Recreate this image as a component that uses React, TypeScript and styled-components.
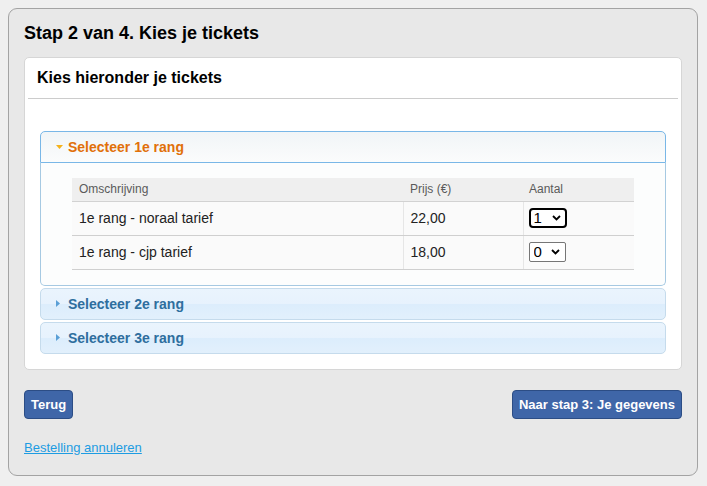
import React, { useState } from "react";
import styled, { createGlobalStyle } from "styled-components";

const Global = createGlobalStyle`
  html, body { margin: 0; padding: 0; background: #efefef; }
  body { padding: 8px; font-family: "Liberation Sans", Arial, sans-serif; color: #222; }
  * { box-sizing: border-box; }
`;

const Panel = styled.div`
  width: 690px;
  background: #e8e8e8;
  border: 1px solid #a3a3a3;
  border-radius: 9px;
  padding: 15px 15px 19px;
`;

const Title = styled.h1`
  margin: 0 0 15px;
  font-size: 18px;
  line-height: 18px;
  font-weight: bold;
  color: #000;
`;

const Card = styled.div`
  background: #fff;
  border: 1px solid #d6d6d6;
  border-radius: 5px;
  padding-bottom: 15px;
`;

const CardHeader = styled.h2`
  margin: 0;
  padding: 10px 12px;
  font-size: 16px;
  line-height: 20px;
  font-weight: bold;
  color: #000;
`;

const Separator = styled.div`
  height: 1px;
  margin: 0 3px;
  background: #cccccc;
`;

const Accordion = styled.div`
  padding: 32px 15px 0;
  display: flex;
  flex-direction: column;
`;

const Item = styled.div<{ $first?: boolean }>`
  margin-top: ${(p) => (p.$first ? "0" : "2px")};
`;

const Header = styled.div<{ $active: boolean }>`
  display: flex;
  align-items: center;
  height: 32px;
  padding: 0 8px 0 14px;
  border: 1px solid ${(p) => (p.$active ? "#79b7e7" : "#c5dbec")};
  border-radius: ${(p) => (p.$active ? "5px 5px 0 0" : "5px")};
  background: ${(p) =>
    p.$active
      ? "linear-gradient(#f1f5f7, #f7f9fa 60%, #fbfcfc)"
      : "linear-gradient(#eaf4fd 0%, #e7f2fd 50%, #dcedfc 51%, #e2f0fc 100%)"};
  color: ${(p) => (p.$active ? "#e17009" : "#2e6e9e")};
  font-size: 14px;
  font-weight: bold;
  cursor: pointer;
`;

const IconBox = styled.span`
  width: 13px;
  display: inline-flex;
  justify-content: flex-start;
  align-items: center;
  padding-left: 1px;
`;

const Content = styled.div`
  border: 1px solid #a6c9e2;
  border-top: 0;
  border-radius: 0 0 5px 5px;
  background: #fcfdfd;
  padding: 15px 31px 15px 31px;
`;

const Table = styled.table`
  width: 100%;
  border-collapse: collapse;
  font-size: 14px;
`;

const Th = styled.th<{ $w?: string; $pad?: string }>`
  text-align: left;
  font-weight: normal;
  font-size: 12px;
  color: #5a5a5a;
  background: #efefef;
  height: 23px;
  padding: 0 ${(p) => p.$pad || "7px"} 1px;
  border-bottom: 1px solid #d2d2d2;
  width: ${(p) => p.$w || "auto"};
`;

const Td = styled.td<{ $sep?: boolean; $pad?: string }>`
  height: 34px;
  padding: 0 ${(p) => p.$pad || "7px"};
  background: #fafafa;
  border-bottom: 1px solid #cfcfcf;
  border-left: ${(p) => (p.$sep ? "1px solid #e6e6e6" : "0")};
  color: #222;
`;

const SelectWrap = styled.span`
  position: relative;
  display: inline-flex;
  vertical-align: middle;
`;

const Select = styled.select<{ $focused?: boolean }>`
  appearance: none;
  -webkit-appearance: none;
  font-family: "Liberation Sans", Arial, sans-serif;
  font-size: 15px;
  color: #000;
  background: #fff;
  width: ${(p) => (p.$focused ? "38px" : "37px")};
  height: 20px;
  padding: 0 0 0 ${(p) => (p.$focused ? "3px" : "4px")};
  border: ${(p) => (p.$focused ? "2px solid #000" : "1px solid #767676")};
  border-radius: ${(p) => (p.$focused ? "4px" : "2px")};
  line-height: 16px;
  outline: none;
`;

const Chevron = styled.svg`
  position: absolute;
  right: 6px;
  top: 7px;
  pointer-events: none;
`;

const ButtonRow = styled.div`
  display: flex;
  justify-content: space-between;
  margin-top: 20px;
`;

const Button = styled.button`
  font-family: "Liberation Sans", Arial, sans-serif;
  font-size: 13px;
  font-weight: bold;
  color: #fff;
  background: #3f66a8;
  border: 1px solid #2c4d85;
  border-radius: 4px;
  height: 29px;
  padding: 0 6px;
  cursor: pointer;
`;

const CancelLink = styled.a`
  display: inline-block;
  margin-top: 21px;
  font-size: 13px;
  line-height: 16px;
  color: #1d9ce2;
  text-decoration: underline;
  cursor: pointer;
`;

const TriangleDown = () => (
  <svg width="7" height="4" viewBox="0 0 7 4">
    <polygon points="0,0 7,0 3.5,4" fill="#f5b21a" />
  </svg>
);

const TriangleRight = () => (
  <svg width="4" height="7" viewBox="0 0 4 7">
    <polygon points="0,0 4,3.5 0,7" fill="#5a9fd6" />
  </svg>
);

type Row = { desc: string; price: string; qty: number; focused?: boolean };

const rows: Row[] = [
  { desc: "1e rang - noraal tarief", price: "22,00", qty: 1, focused: true },
  { desc: "1e rang - cjp tarief", price: "18,00", qty: 0 },
];

const QtySelect = ({ value, focused }: { value: number; focused?: boolean }) => (
  <SelectWrap>
    <Select $focused={focused} defaultValue={String(value)}>
      {[0, 1, 2, 3, 4, 5, 6, 7, 8, 9, 10].map((n) => (
        <option key={n} value={n}>
          {n}
        </option>
      ))}
    </Select>
    <Chevron width="9" height="6" viewBox="0 0 9 6">
      <polyline points="1,1 4.5,4.5 8,1" fill="none" stroke="#000" strokeWidth="1.8" />
    </Chevron>
  </SelectWrap>
);

const sections = ["Selecteer 1e rang", "Selecteer 2e rang", "Selecteer 3e rang"];

export default function App() {
  const [open, setOpen] = useState(0);
  return (
    <>
      <Global />
      <Panel>
        <Title>Stap 2 van 4. Kies je tickets</Title>
        <Card>
          <CardHeader>Kies hieronder je tickets</CardHeader>
          <Separator />
          <Accordion>
            {sections.map((s, i) => (
              <Item key={s} $first={i === 0}>
                <Header $active={open === i} onClick={() => setOpen(i)}>
                  <IconBox>{open === i ? <TriangleDown /> : <TriangleRight />}</IconBox>
                  {s}
                </Header>
                {open === i && (
                  <Content>
                    <Table>
                      <thead>
                        <tr>
                          <Th>Omschrijving</Th>
                          <Th $w="120px">Prijs (€)</Th>
                          <Th $w="111px" $pad="6px">Aantal</Th>
                        </tr>
                      </thead>
                      <tbody>
                        {(i === 0 ? rows : []).map((r) => (
                          <tr key={r.desc}>
                            <Td>{r.desc}</Td>
                            <Td $sep>{r.price}</Td>
                            <Td $sep $pad="5px">
                              <QtySelect value={r.qty} focused={r.focused} />
                            </Td>
                          </tr>
                        ))}
                      </tbody>
                    </Table>
                  </Content>
                )}
              </Item>
            ))}
          </Accordion>
        </Card>
        <ButtonRow>
          <Button>Terug</Button>
          <Button>Naar stap 3: Je gegevens</Button>
        </ButtonRow>
        <CancelLink>Bestelling annuleren</CancelLink>
      </Panel>
    </>
  );
}
